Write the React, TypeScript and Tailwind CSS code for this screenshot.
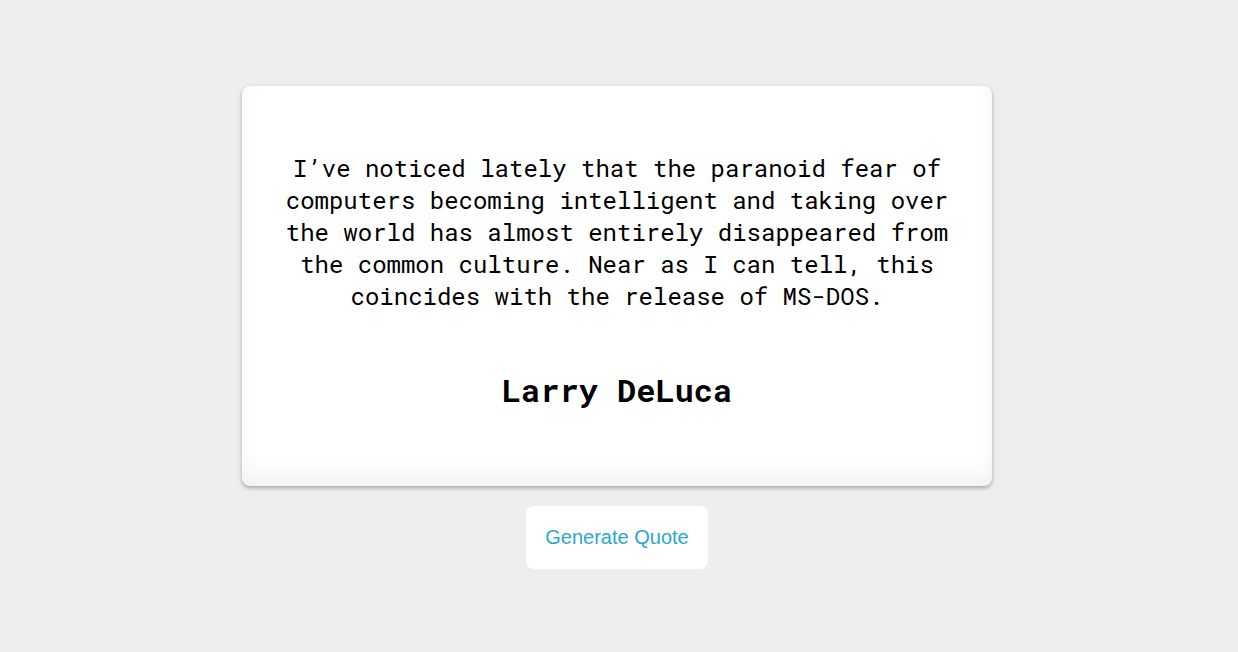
import React from "react";

export default function App() {
  return (
    <div className="min-h-[652px] w-full bg-[#eeeeee] flex flex-col items-center pt-[86px] pr-[4px]">
      <div className="w-[750px] h-[400px] bg-white rounded-[8px] shadow-[0_2px_4px_rgba(0,0,0,0.3),inset_0_-12px_20px_rgba(0,0,0,0.05)] flex flex-col items-center pt-[66px] px-[40px] text-black [font-family:'Roboto_Mono','DejaVu_Sans_Mono',monospace]">
        <p className="text-[24px] leading-[32px] text-center">
          I’ve noticed lately that the paranoid fear of computers becoming intelligent and taking over the world has almost entirely disappeared from the common culture. Near as I can tell, this coincides with the release of MS-DOS.
        </p>
        <h2 className="mt-[57px] text-[32px] leading-[42px] font-bold text-center">Larry DeLuca</h2>
      </div>
      <button className="mt-[20px] h-[63px] px-[19.5px] pb-[1px] bg-white rounded-[8px] text-[20px] text-[#2aa8d2] [font-family:'Liberation_Sans',Arial,sans-serif]">
        Generate Quote
      </button>
    </div>
  );
}
